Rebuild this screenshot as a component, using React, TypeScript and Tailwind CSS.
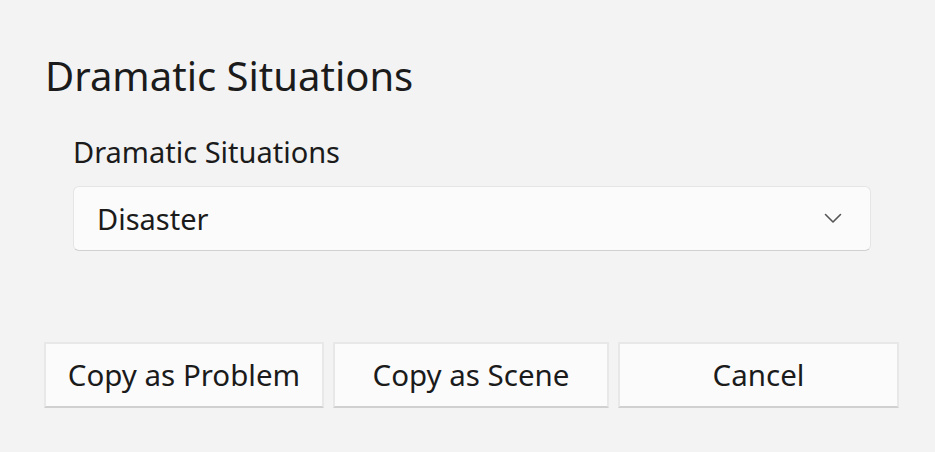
import React from "react";

export default function App() {
  const font = { fontFamily: '"Noto Sans", "Open Sans", sans-serif' };
  return (
    <div className="w-[935px] h-[452px] bg-[#f3f3f3] text-[#1b1b1b] flex flex-col" style={font}>
      <div className="pl-[45px] pt-[48px] text-[40px] leading-[56px]">Dramatic Situations</div>
      <div className="pl-[73px] pr-[64px] mt-[29px] flex flex-col">
        <div className="text-[29px] leading-[38px]">Dramatic Situations</div>
        <div className="mt-[15px] h-[65px] bg-[#fbfbfb] border border-[#e5e5e5] border-b-[#d0d0d0] rounded-[6px] flex items-center justify-between pl-[23px] pr-[28px]">
          <span className="text-[29px]">Disaster</span>
          <svg width="18" height="11" viewBox="0 0 18 11" fill="none">
            <path d="M1.5 1.5 L9 9 L16.5 1.5" stroke="#555" strokeWidth="1.6" strokeLinecap="round" strokeLinejoin="round" />
          </svg>
        </div>
      </div>
      <div className="flex pl-[44px] mt-[91px] gap-[9px]">
        {[
          ["Copy as Problem", "w-[280px]"],
          ["Copy as Scene", "w-[276px]"],
          ["Cancel", "w-[281px]"],
        ].map(([t, w]) => (
          <div
            key={t}
            className={`${w} h-[66px] bg-[#fbfbfb] border-2 border-[#e8e8e8] border-b-[#d0d0d0] flex items-center justify-center text-[29.5px]`}
          >
            {t}
          </div>
        ))}
      </div>
    </div>
  );
}
